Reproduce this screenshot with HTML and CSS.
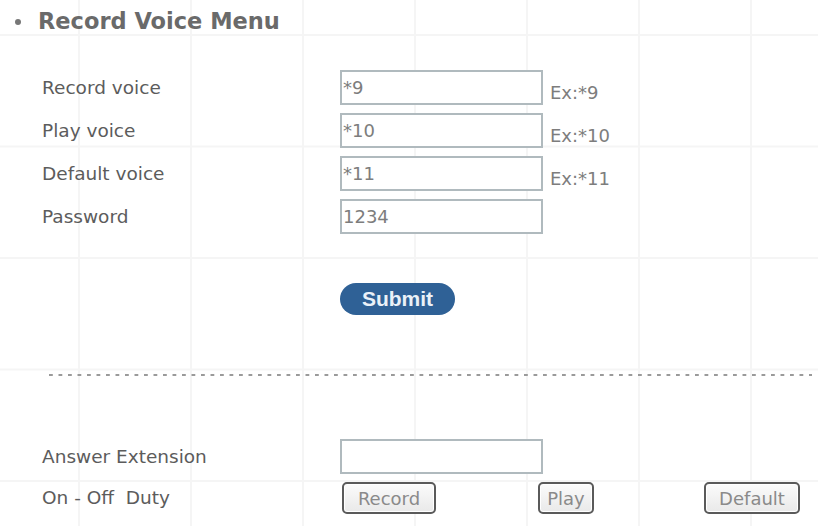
FILE: index.html
```html
<!DOCTYPE html>
<html>
<head>
<meta charset="utf-8">
<link rel="stylesheet" href="styles.css">
</head>
<body>
<div class="page">
  <h1 class="title"><span class="bullet"></span>Record Voice Menu</h1>
  <div class="form">
    <div class="label">Record voice</div>
    <div class="field">*9</div>
    <div class="ex">Ex:*9</div>
    <div class="label">Play voice</div>
    <div class="field">*10</div>
    <div class="ex">Ex:*10</div>
    <div class="label">Default voice</div>
    <div class="field">*11</div>
    <div class="ex">Ex:*11</div>
    <div class="label">Password</div>
    <div class="field">1234</div>
    <div class="ex"></div>
  </div>
  <div class="submit-row"><button class="submit">Submit</button></div>
  <div class="divider"></div>
  <div class="form2">
    <div class="label">Answer Extension</div>
    <div class="field"></div>
    <div class="label">On - Off&nbsp; Duty</div>
    <div class="btns">
      <button class="btn btn-record">Record</button>
      <button class="btn btn-play">Play</button>
      <button class="btn btn-default">Default</button>
    </div>
  </div>
</div>
</body>
</html>
```
FILE: styles.css
```css
html, body {
  margin: 0;
  padding: 0;
}
body {
  width: 818px;
  height: 526px;
  overflow: hidden;
  font-family: "DejaVu Sans", Verdana, sans-serif;
  background-color: #ffffff;
  background-image:
    linear-gradient(to right, #f5f5f5 0, #f5f5f5 2px, transparent 2px),
    linear-gradient(to bottom, #f5f5f5 0, #f5f5f5 2px, transparent 2px);
  background-size: 112px 111.5px;
  background-position: 78px 34px;
}
.page {
  padding-top: 8px;
}
.title {
  margin: 0 0 36px 0;
  font-size: 22.5px;
  line-height: 26px;
  font-weight: bold;
  color: #6a6a6a;
  display: flex;
  align-items: center;
  padding-left: 15px;
}
.bullet {
  width: 6px;
  height: 6px;
  border-radius: 50%;
  background: #777;
  margin-right: 17px;
  margin-top: 2px;
}
.form {
  display: grid;
  grid-template-columns: 298px 203px auto;
  grid-auto-rows: 35px;
  row-gap: 8px;
  padding-left: 42px;
}
.label {
  align-self: center;
  font-size: 18.5px;
  color: #5c5c5c;
  line-height: 22px;
}
.field {
  box-sizing: border-box;
  height: 35px;
  border: 2px solid #b0babe;
  background: #fff;
  font-size: 18px;
  color: #7d7d7d;
  line-height: 31px;
  padding-left: 1px;
}
.ex {
  align-self: end;
  font-size: 18px;
  line-height: 20px;
  color: #7d7d7d;
  margin-left: 7px;
  margin-bottom: 2px;
}
.submit-row {
  padding-left: 340px;
  margin-top: 49px;
}
.submit {
  display: block;
  width: 115px;
  height: 32px;
  border: none;
  border-radius: 16px;
  background: #2f6196;
  color: #eaf1f8;
  font-family: "Liberation Sans", Arial, sans-serif;
  font-weight: bold;
  font-size: 21px;
  padding: 0;
  line-height: 32px;
}
.divider {
  margin: 59px 6px 0 49px;
  height: 2px;
  background-image: linear-gradient(to right, #9a9a9a 0, #9a9a9a 4px, transparent 4px);
  background-size: 9.5px 2px;
}
.form2 {
  display: grid;
  grid-template-columns: 298px auto;
  grid-template-rows: 35px 32px;
  row-gap: 8px;
  padding-left: 42px;
  margin-top: 63px;
}
.form2 .field {
  width: 203px;
}
.btns {
  display: flex;
  align-items: center;
  padding-left: 2px;
}
.btn {
  box-sizing: border-box;
  height: 32px;
  border: 2px solid #5a5a5a;
  border-radius: 5px;
  background: linear-gradient(to bottom, #fbfbfb, #e9e9e9);
  box-shadow: inset 0 0 0 1px #ffffff;
  font-family: "DejaVu Sans", Verdana, sans-serif;
  font-size: 18px;
  color: #8a8a8a;
  padding: 0;
}
.btn-record {
  width: 94px;
}
.btn-play {
  width: 56px;
  margin-left: 102px;
}
.btn-default {
  width: 96px;
  margin-left: 110px;
}
```
